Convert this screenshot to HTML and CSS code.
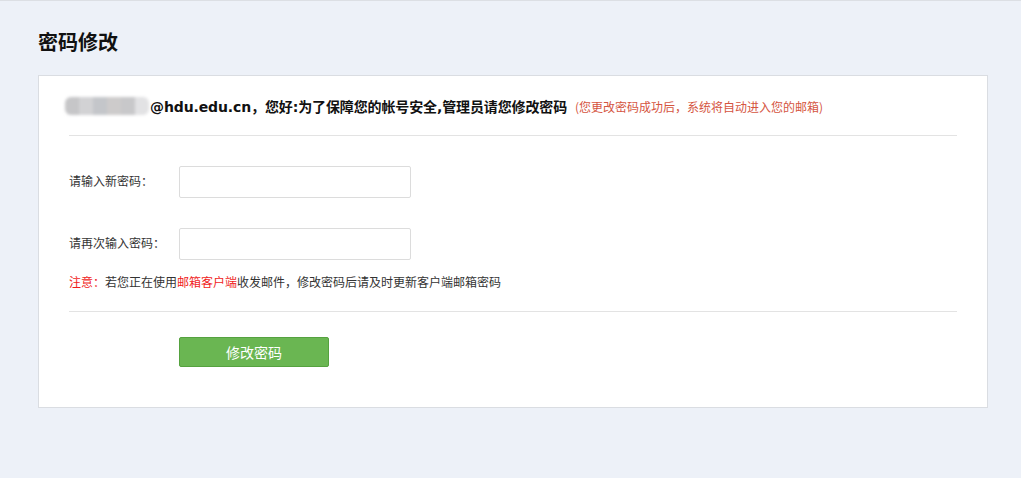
FILE: index.html
```html
<!DOCTYPE html>
<html lang="zh-CN">
<head>
<meta charset="utf-8">
<title>密码修改</title>
<link rel="stylesheet" href="styles.css">
</head>
<body>
<div class="page">
  <h1 class="title">密码修改</h1>
  <div class="card">
    <div class="card-head">
      <span class="blur-name"><i></i><i></i><i></i><i></i><i></i><i></i></span><span class="greet">@hdu.edu.cn，您好:为了保障您的帐号安全,管理员请您修改密码</span><span class="head-note">(您更改密码成功后，系统将自动进入您的邮箱)</span>
    </div>
    <div class="form">
      <div class="row">
        <label class="label">请输入新密码：</label>
        <input class="field" type="password">
      </div>
      <div class="row">
        <label class="label">请再次输入密码：</label>
        <input class="field" type="password">
      </div>
      <p class="note"><span class="red">注意：</span>若您正在使用<span class="red">邮箱客户端</span>收发邮件，修改密码后请及时更新客户端邮箱密码</p>
    </div>
    <div class="actions">
      <button class="btn" type="button">修改密码</button>
    </div>
  </div>
</div>
</body>
</html>
```
FILE: styles.css
```css
html, body {
  margin: 0;
  padding: 0;
}
body {
  background: #edf1f8;
  border-top: 1px solid #dcdfe4;
  height: 477px;
  font-family: "Noto Sans CJK SC", "Liberation Sans", sans-serif;
  color: #333;
}
.page {
  padding: 0 33px 0 38px;
}
.title {
  margin: 0;
  padding-top: 27px;
  height: 47px;
  font-size: 20px;
  line-height: 28px;
  font-weight: bold;
  color: #111;
}
.card {
  background: #fff;
  border: 1px solid #dadde2;
  padding: 0 30px 40px 30px;
}
.card-head {
  display: flex;
  align-items: center;
  height: 60px;
  padding-top: 1px;
  box-sizing: border-box;
  border-bottom: 1px solid #e3e3e3;
}
.blur-name {
  display: inline-flex;
  width: 84px;
  height: 18px;
  margin-left: -4px;
  margin-right: 1px;
  filter: blur(1.5px);
  border-radius: 6px;
  overflow: hidden;
}
.blur-name i {
  flex: 1;
  background: #c6c6c8;
}
.blur-name i:nth-child(2) { background: #d2d2d4; }
.blur-name i:nth-child(3) { background: #c4c6ca; }
.blur-name i:nth-child(4) { background: #cdcbcb; }
.blur-name i:nth-child(5) { background: #c8c8ca; }
.blur-name i:nth-child(6) { background: #e2e2e4; }
.greet {
  font-size: 14px;
  font-weight: bold;
  color: #111;
  font-family: "DejaVu Sans", "Noto Sans CJK SC", sans-serif;
  letter-spacing: -0.12px;
}
.head-note {
  font-size: 12px;
  color: #d5553f;
  margin-left: 8px;
}
.form {
  padding-top: 30px;
  padding-bottom: 20px;
  border-bottom: 1px solid #e3e3e3;
}
.row {
  display: flex;
  align-items: center;
  margin-bottom: 30px;
}
.row + .row {
  margin-bottom: 13px;
}
.label {
  width: 110px;
  font-size: 12px;
  line-height: 16px;
  padding-bottom: 2px;
  color: #333;
}
.field {
  width: 232px;
  height: 32px;
  box-sizing: border-box;
  border: 1px solid #dcdcdc;
  border-radius: 2px;
  margin: 0;
  padding: 0 8px;
  outline: none;
}
.note {
  margin: 0;
  font-size: 12px;
  line-height: 18px;
  color: #333;
}
.red {
  color: #f01c1c;
}
.actions {
  padding-top: 25px;
  padding-left: 110px;
}
.btn {
  width: 150px;
  height: 30px;
  background: #6ab652;
  border: 1px solid #55a23f;
  border-radius: 2px;
  color: #fff;
  font-size: 14px;
  font-family: "Noto Sans CJK SC", sans-serif;
  padding: 0;
  cursor: pointer;
}
```
